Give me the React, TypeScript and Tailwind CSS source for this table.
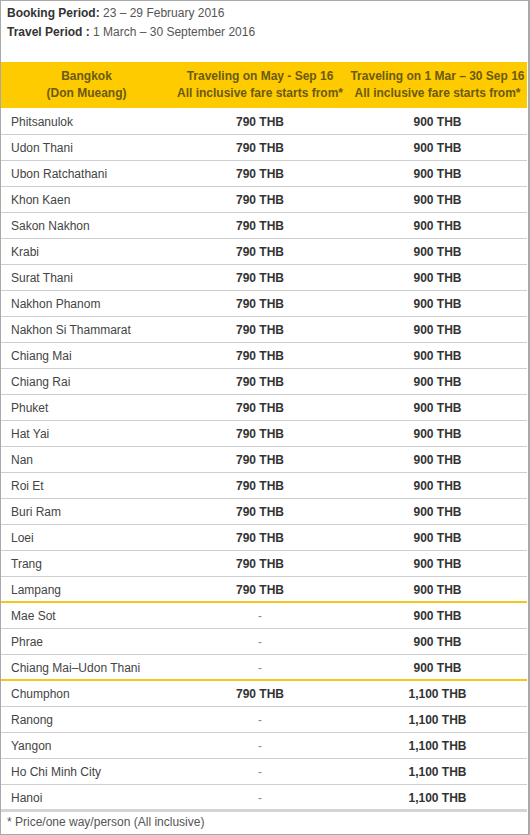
const standard = [
  "Phitsanulok",
  "Udon Thani",
  "Ubon Ratchathani",
  "Khon Kaen",
  "Sakon Nakhon",
  "Krabi",
  "Surat Thani",
  "Nakhon Phanom",
  "Nakhon Si Thammarat",
  "Chiang Mai",
  "Chiang Rai",
  "Phuket",
  "Hat Yai",
  "Nan",
  "Roi Et",
  "Buri Ram",
  "Loei",
  "Trang",
  "Lampang",
]

const extra = ["Mae Sot", "Phrae", "Chiang Mai\u2013Udon Thani"]

const international: [string, string][] = [
  ["Chumphon", "790 THB"],
  ["Ranong", "-"],
  ["Yangon", "-"],
  ["Ho Chi Minh City", "-"],
  ["Hanoi", "-"],
]

function Row({ city, may, mar, border }: { city: string; may: string; mar: string; border: string }) {
  return (
    <tr className={border}>
      <td className="h-[26px] pl-[10px] pt-[2px] text-[#444]">{city}</td>
      <td className={may === "-" ? "pt-[2px] text-center text-[#888]" : "pt-[2px] text-center font-bold text-[#333]"}>{may}</td>
      <td className="pt-[2px] text-center font-bold text-[#333]">{mar}</td>
    </tr>
  )
}

export default function App() {
  return (
    <div className="h-[835px] w-[530px] overflow-hidden border-y border-l border-r-2 border-[#a9a9a9] bg-white font-['Liberation_Sans',Arial,sans-serif] text-[12px]">
      <div className="px-[6px] pt-[3px] leading-[19px] text-[#555]">
        <p>
          <span className="font-bold text-[#333]">Booking Period:</span> 23 – 29 February 2016
        </p>
        <p>
          <span className="font-bold text-[#333]">Travel Period :</span> 1 March – 30 September 2016
        </p>
      </div>
      <table className="mt-[20px] w-[526px] table-fixed border-collapse">
        <colgroup>
          <col className="w-[171px]" />
          <col className="w-[176px]" />
          <col className="w-[179px]" />
        </colgroup>
        <thead>
          <tr className="h-[46px] bg-[#fecb00] text-center font-bold leading-[17px] text-[#6b5a12]">
            <th>
              Bangkok
              <br />
              (Don Mueang)
            </th>
            <th>
              Traveling on May - Sep 16
              <br />
              All inclusive fare starts from*
            </th>
            <th>
              Traveling on 1 Mar – 30 Sep 16
              <br />
              All inclusive fare starts from*
            </th>
          </tr>
        </thead>
        <tbody>
          {standard.map((c, i) => (
            <Row
              key={c}
              city={c}
              may="790 THB"
              mar="900 THB"
              border={i === standard.length - 1 ? "border-b-2 border-[#f2c81c]" : "border-b border-[#cfcfcf]"}
            />
          ))}
          {extra.map((c, i) => (
            <Row
              key={c}
              city={c}
              may="-"
              mar="900 THB"
              border={i === extra.length - 1 ? "border-b-2 border-[#f2c81c]" : "border-b border-[#cfcfcf]"}
            />
          ))}
          {international.map(([c, may], i) => (
            <Row
              key={c}
              city={c}
              may={may}
              mar="1,100 THB"
              border={i === international.length - 1 ? "border-b-[3px] border-[#d4d4d4]" : "border-b border-[#cfcfcf]"}
            />
          ))}
        </tbody>
      </table>
      <p className="px-[6px] pt-[1px] text-[#555]">* Price/one way/person (All inclusive)</p>
    </div>
  )
}
